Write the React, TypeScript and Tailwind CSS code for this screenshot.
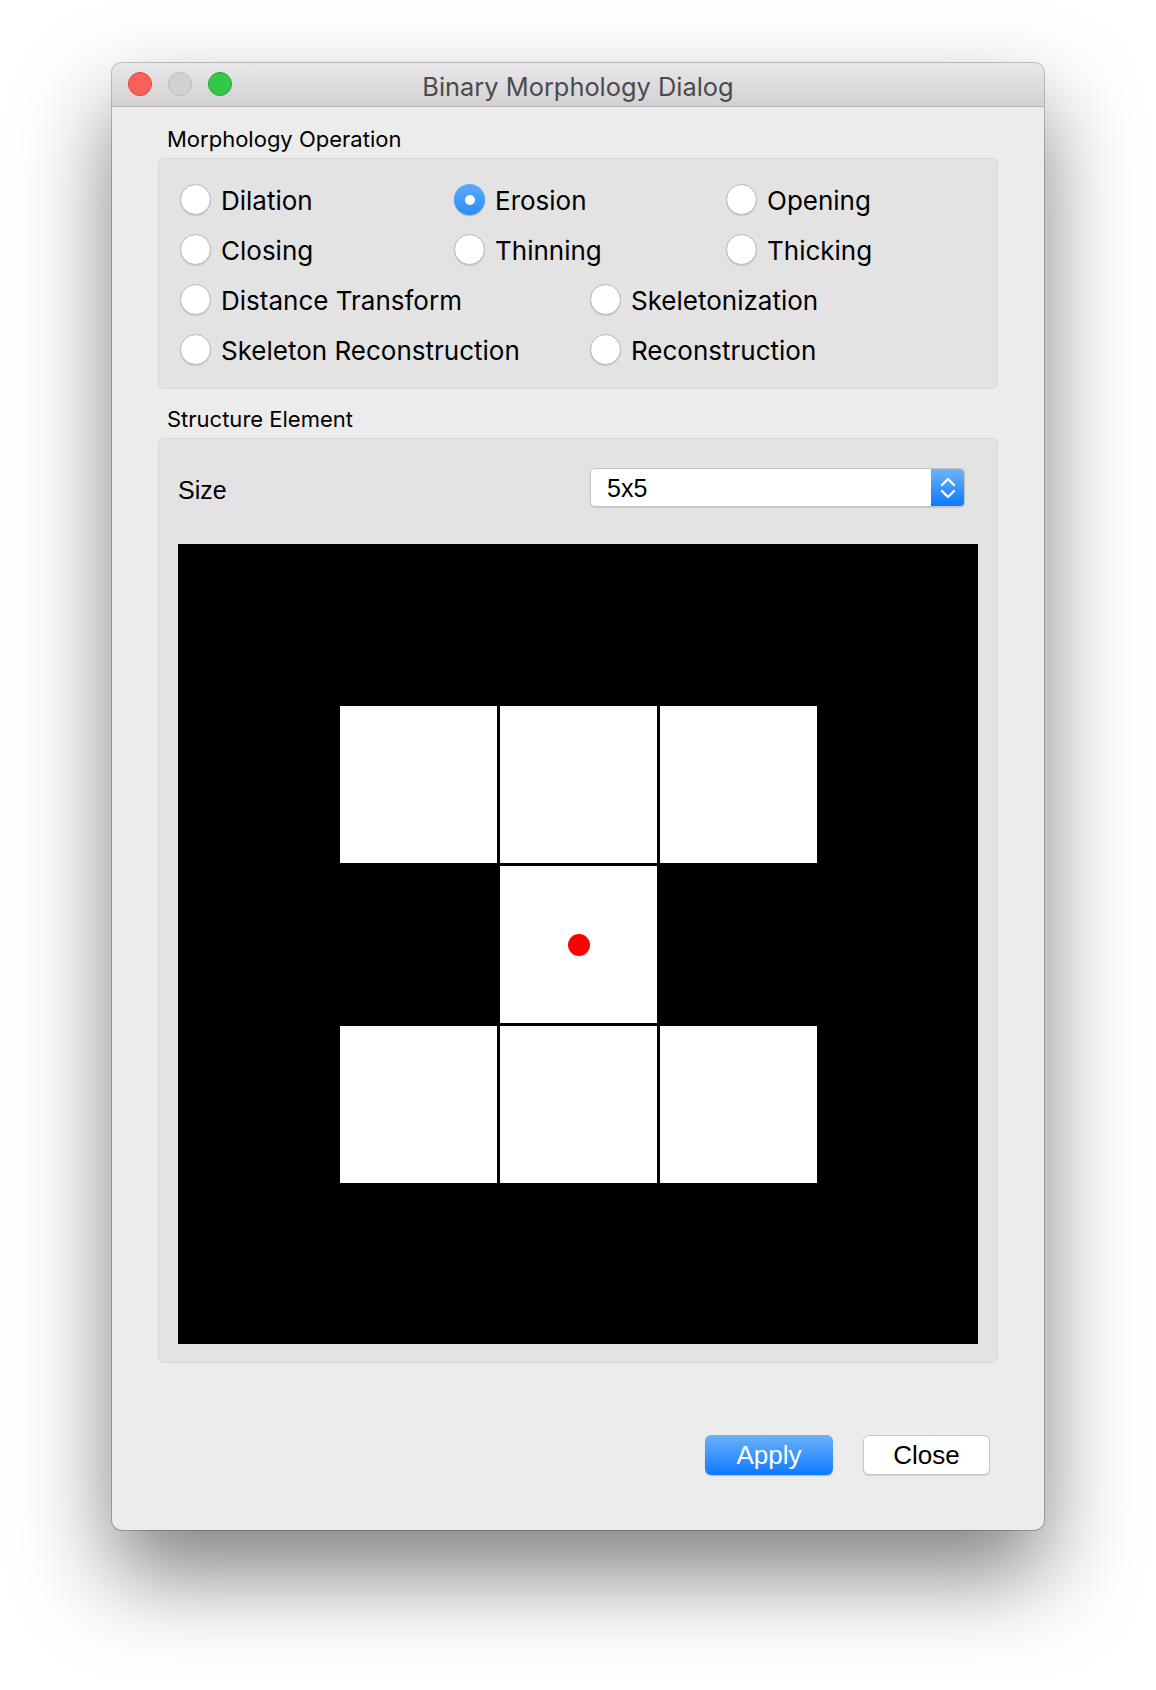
const sf = "font-['Inter','Noto_Sans',sans-serif]";
const helv = "font-['Liberation_Sans',Arial,sans-serif]";

type RadioProps = { label: string; checked?: boolean };

const Radio = ({ label, checked }: RadioProps) => (
  <div className="flex h-[31px] items-center">
    {checked ? (
      <span className="flex h-[31px] w-[31px] shrink-0 items-center justify-center rounded-full bg-[linear-gradient(to_bottom,#5eabfc,#2b8cfb)] shadow-[0_1px_1px_rgba(0,0,0,0.25)]">
        <span className="h-[10px] w-[10px] rounded-full bg-white" />
      </span>
    ) : (
      <span className="h-[31px] w-[31px] shrink-0 rounded-full border border-[#b9b9b9] bg-white shadow-[0_1px_1px_rgba(0,0,0,0.12)]" />
    )}
    <span className={`ml-[10px] pt-[2px] text-[26px] leading-[31px] text-black ${sf}`}>{label}</span>
  </div>
);

// 5x5 structure element, 1 = white cell
const kernel = [
  [0, 0, 0, 0, 0],
  [0, 1, 1, 1, 0],
  [0, 0, 1, 0, 0],
  [0, 1, 1, 1, 0],
  [0, 0, 0, 0, 0],
];

const App = () => {
  return (
    <div className="min-h-[1690px] w-[1156px] overflow-hidden bg-white pl-[112px] pt-[63px]">
      <div className="w-[932px] rounded-[10px] bg-[#ececec] shadow-[0_0_0_1px_rgba(0,0,0,0.22),0_44px_90px_rgba(0,0,0,0.5)]">
        {/* title bar */}
        <div className="relative flex h-[44px] items-center justify-center rounded-t-[10px] border-b border-[#b6b4b6] bg-[linear-gradient(to_bottom,#e9e7e9,#d3d1d3)]">
          <div className="absolute left-[16px] top-[9px] flex gap-[16px]">
            <span className="h-[24px] w-[24px] rounded-full border border-[#e0443e] bg-[#fc605c]" />
            <span className="h-[24px] w-[24px] rounded-full border border-[#bcbcbc] bg-[#d1d1d1]" />
            <span className="h-[24px] w-[24px] rounded-full border border-[#24a732] bg-[#34c84a]" />
          </div>
          <span className={`pt-[3px] text-[25.4px] leading-[41px] text-[#4b4b4b] ${sf}`}>Binary Morphology Dialog</span>
        </div>

        <div className="px-[46px]">
          <div className={`pl-[9px] pt-[19px] text-[22px] leading-[26px] text-black ${sf}`}>Morphology Operation</div>
          <div className="mt-[6px] h-[231px] rounded-[6px] border border-[#d9d9d9] bg-[#e3e3e3] pl-[21px] pt-[25px]">
            <div className="flex flex-col gap-[19px]">
              <div className="flex">
                <div className="w-[274px]"><Radio label="Dilation" /></div>
                <div className="w-[272px]"><Radio label="Erosion" checked /></div>
                <div><Radio label="Opening" /></div>
              </div>
              <div className="flex">
                <div className="w-[274px]"><Radio label="Closing" /></div>
                <div className="w-[272px]"><Radio label="Thinning" /></div>
                <div><Radio label="Thicking" /></div>
              </div>
              <div className="flex">
                <div className="w-[410px]"><Radio label="Distance Transform" /></div>
                <div><Radio label="Skeletonization" /></div>
              </div>
              <div className="flex">
                <div className="w-[410px]"><Radio label="Skeleton Reconstruction" /></div>
                <div><Radio label="Reconstruction" /></div>
              </div>
            </div>
          </div>

          <div className={`pl-[9px] pt-[17px] text-[22px] leading-[26px] text-black ${sf}`}>Structure Element</div>
          <div className="mt-[6px] rounded-[6px] border border-[#d9d9d9] bg-[#e3e3e3] pb-[18px] pt-[29px]">
            <div className="flex h-[39px] items-center">
              <span className={`w-[431px] pl-[19px] pt-[6px] text-[25px] text-black ${helv}`}>Size</span>
              <div className="flex h-[39px] w-[375px] overflow-hidden rounded-[5px] border border-[#c3c3c3] bg-white shadow-[0_1px_1px_rgba(0,0,0,0.12)]">
                <span className={`flex-1 pl-[16px] pt-[2px] text-[25px] leading-[35px] text-black ${helv}`}>5x5</span>
                <span className="flex w-[33px] items-center justify-center bg-[linear-gradient(to_bottom,#6db4fb,#0c79fe)]">
                  <svg width="18" height="26" viewBox="0 0 18 26" fill="none" stroke="white" strokeWidth="2.4" strokeLinecap="round" strokeLinejoin="round">
                    <path d="M3 10 L9 4 L15 10" />
                    <path d="M3 16 L9 22 L15 16" />
                  </svg>
                </span>
              </div>
            </div>

            <div className="ml-[19px] mt-[37px] grid h-[800px] w-[800px] grid-cols-5 grid-rows-5 bg-black">
              {kernel.flatMap((row, r) =>
                row.map((v, c) =>
                  v ? (
                    <div key={`${r}-${c}`} className="flex items-center justify-center border-b border-l-2 border-r border-t-2 border-black bg-white">
                      {r === 2 && c === 2 && <span className="h-[22px] w-[22px] rounded-full bg-[#ff0000]" />}
                    </div>
                  ) : (
                    <div key={`${r}-${c}`} />
                  )
                )
              )}
            </div>
          </div>
        </div>

        {/* buttons */}
        <div className="flex justify-end gap-[30px] pb-[55px] pr-[54px] pt-[72px]">
          <button className={`h-[40px] w-[128px] rounded-[6px] bg-[linear-gradient(to_bottom,#6bb2fb,#0f7afe)] text-[26px] text-white shadow-[0_1px_1px_rgba(0,0,0,0.2)] ${helv}`}>
            Apply
          </button>
          <button className={`h-[40px] w-[127px] rounded-[6px] border border-[#c6c6c6] bg-white text-[26px] text-black shadow-[0_1px_1px_rgba(0,0,0,0.12)] ${helv}`}>
            Close
          </button>
        </div>
      </div>
    </div>
  );
};

export default App;
